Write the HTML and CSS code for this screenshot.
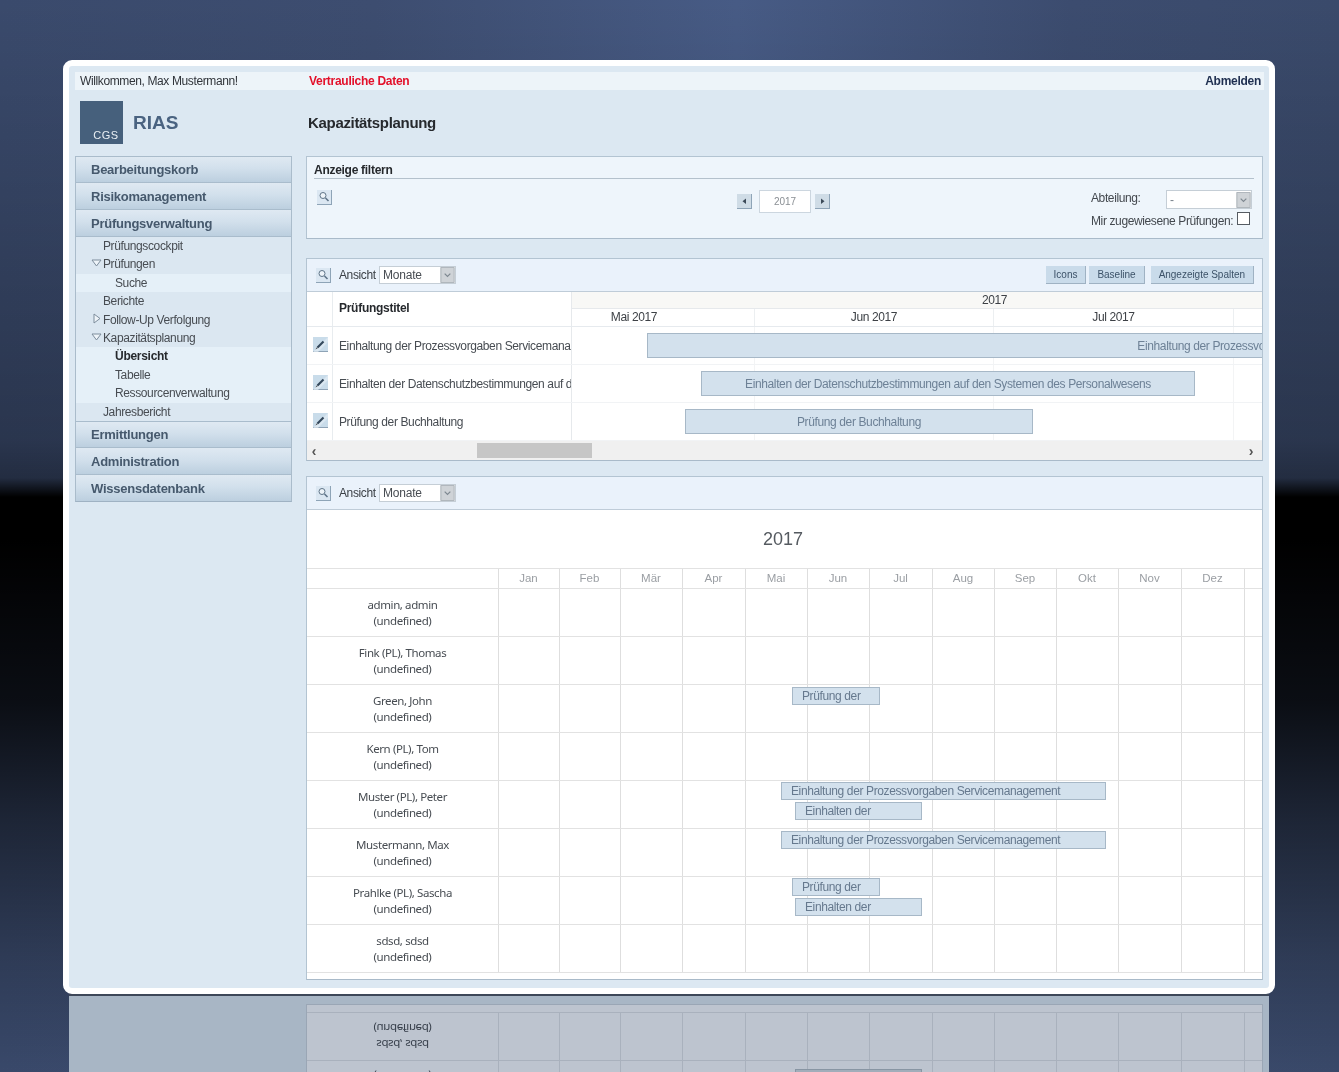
FILE: index.html
```html
<!DOCTYPE html>
<html lang="de">
<head>
<meta charset="utf-8">
<title>RIAS – Kapazitätsplanung</title>
<link rel="stylesheet" href="styles.css">
</head>
<body>
<svg class="defs" width="0" height="0" aria-hidden="true">
  <symbol id="i-search" viewBox="0 0 15 15">
    <rect width="15" height="15" fill="#dbe7f2"/>
    <path d="M0 14.500H15M14.500 0V15" stroke="#8ea4b7" fill="none"/>
    <circle cx="6" cy="5.500" r="3" fill="#eef4f9" stroke="#5f7488"/>
    <path d="M8.500 8l3 3" stroke="#5f7488" stroke-width="1.600"/>
  </symbol>
  <symbol id="i-pencil" viewBox="0 0 15 15">
    <rect width="15" height="15" fill="#c9dcea"/>
    <path d="M0 14.500H15" stroke="#8ea3b6"/>
    <path d="M0 15L15 0V5L5 15Z" fill="#e2edf5" opacity=".7"/>
    <path d="M4.500 10.500L10.500 4.500" stroke="#34485c" stroke-width="2.200"/>
    <path d="M2.500 12.500l1.500-2.300 .8.800Z" fill="#222"/>
  </symbol>
  <symbol id="i-chev" viewBox="0 0 15 17">
    <rect width="15" height="17" fill="#cfd3d7"/>
    <path d="M.5 .5H14.500V16.500H.5Z" stroke="#aeb4ba" fill="none"/>
    <path d="M4.500 7l3 3 3-3" stroke="#7e8890" stroke-width="1.300" fill="none"/>
  </symbol>
  <symbol id="i-down" viewBox="0 0 11 8">
    <path d="M1 1H10L5.500 7Z" fill="#eef4f9" stroke="#7d8d9c"/>
  </symbol>
  <symbol id="i-right" viewBox="0 0 8 11">
    <path d="M1 1V10L7 5.500Z" fill="#eef4f9" stroke="#7d8d9c"/>
  </symbol>
</svg>

<div class="page">
  <div class="window">
    <div class="shell">
      <div class="topbar">
        <span class="welcome">Willkommen, Max Mustermann!</span>
        <span class="secret">Vertrauliche Daten</span>
        <a class="logout">Abmelden</a>
      </div>

      <div class="brand">
        <div class="logo"><span>CGS</span></div>
        <div class="brand-name">RIAS</div>
      </div>
      <h1 class="title">Kapazitätsplanung</h1>

      <nav class="sidebar">
        <div class="nav-head">Bearbeitungskorb</div>
        <div class="nav-head">Risikomanagement</div>
        <div class="nav-head">Prüfungsverwaltung</div>
        <div class="nav-item">Prüfungscockpit</div>
        <div class="nav-item"><svg class="tw-down"><use href="#i-down"/></svg>Prüfungen</div>
        <div class="nav-sub">Suche</div>
        <div class="nav-item">Berichte</div>
        <div class="nav-item"><svg class="tw-right"><use href="#i-right"/></svg>Follow-Up Verfolgung</div>
        <div class="nav-item"><svg class="tw-down"><use href="#i-down"/></svg>Kapazitätsplanung</div>
        <div class="nav-sub nav-current">Übersicht</div>
        <div class="nav-sub">Tabelle</div>
        <div class="nav-sub">Ressourcenverwaltung</div>
        <div class="nav-item">Jahresbericht</div>
        <div class="nav-head nav-head-rule">Ermittlungen</div>
        <div class="nav-head">Administration</div>
        <div class="nav-head nav-head-last">Wissensdatenbank</div>
      </nav>

      <main class="content">
        <section class="panel filter">
          <div class="filter-title">Anzeige filtern</div>
          <div class="filter-body">
            <div class="filter-left"><svg class="ico"><use href="#i-search"/></svg></div>
            <div class="year-nav">
              <button class="step"><svg viewBox="0 0 15 15"><rect width="15" height="15" fill="#cfdce6"/><path d="M0 14.500H15M14.500 0V15" stroke="#8ea4b7"/><path d="M9 4.500V10L5.500 7.200Z" fill="#3c4a58"/></svg></button>
              <div class="year">2017</div>
              <button class="step"><svg viewBox="0 0 15 15"><rect width="15" height="15" fill="#cfdce6"/><path d="M0 14.500H15M14.500 0V15" stroke="#8ea4b7"/><path d="M6 4.500V10L9.500 7.200Z" fill="#3c4a58"/></svg></button>
            </div>
            <div class="filter-right">
              <div class="filter-line">
                <span class="dept-label">Abteilung:</span>
                <div class="select select-dept"><span>-</span><svg class="chev"><use href="#i-chev"/></svg></div>
              </div>
              <div class="filter-line filter-check">
                <span>Mir zugewiesene Prüfungen:</span>
                <span class="checkbox"></span>
              </div>
            </div>
          </div>
        </section>

        <section class="panel gantt">
          <div class="toolbar">
            <svg class="ico"><use href="#i-search"/></svg>
            <span class="tool-label">Ansicht</span>
            <div class="select"><span>Monate</span><svg class="chev"><use href="#i-chev"/></svg></div>
            <div class="tool-actions">
              <button class="btn">Icons</button>
              <button class="btn">Baseline</button>
              <button class="btn btn-wide">Angezeigte Spalten</button>
            </div>
          </div>
          <div class="g-head">
            <div class="g-icon"></div>
            <div class="g-title g-title-head">Prüfungstitel</div>
            <div class="g-scale">
              <div class="g-year">2017</div>
              <div class="g-months">
                <span class="g-month-first">Mai 2017</span><span>Jun 2017</span><span>Jul 2017</span><span></span>
              </div>
            </div>
          </div>
          <div class="g-row">
            <div class="g-icon"><svg class="ico"><use href="#i-pencil"/></svg></div>
            <div class="g-title">Einhaltung der Prozessvorgaben Servicemanagement</div>
            <div class="g-track"><div class="g-bar" style="left:75px;width:1250px">Einhaltung der Prozessvorgaben Servicemanagement</div></div>
          </div>
          <div class="g-row">
            <div class="g-icon"><svg class="ico"><use href="#i-pencil"/></svg></div>
            <div class="g-title">Einhalten der Datenschutzbestimmungen auf den Systemen des Personalwesens</div>
            <div class="g-track"><div class="g-bar" style="left:129px;width:494px">Einhalten der Datenschutzbestimmungen auf den Systemen des Personalwesens</div></div>
          </div>
          <div class="g-row">
            <div class="g-icon"><svg class="ico"><use href="#i-pencil"/></svg></div>
            <div class="g-title">Prüfung der Buchhaltung</div>
            <div class="g-track"><div class="g-bar" style="left:113px;width:348px">Prüfung der Buchhaltung</div></div>
          </div>
          <div class="scrollbar">
            <span class="arrow">‹</span>
            <div class="scroll-track"><div class="thumb"></div></div>
            <span class="arrow arrow-end">›</span>
          </div>
        </section>

        <section class="panel capacity">
          <div class="toolbar">
            <svg class="ico"><use href="#i-search"/></svg>
            <span class="tool-label">Ansicht</span>
            <div class="select"><span>Monate</span><svg class="chev"><use href="#i-chev"/></svg></div>
          </div>
          <div class="cap-title">2017</div>
          <div class="cap-months">
            <span></span><span>Jan</span><span>Feb</span><span>Mär</span><span>Apr</span><span>Mai</span><span>Jun</span><span>Jul</span><span>Aug</span><span>Sep</span><span>Okt</span><span>Nov</span><span>Dez</span><span></span>
          </div>
          <div class="cap-row"><div class="cap-name">admin, admin<br>(undefined)</div><div class="cap-track"></div></div>
          <div class="cap-row"><div class="cap-name">Fink (PL), Thomas<br>(undefined)</div><div class="cap-track"></div></div>
          <div class="cap-row"><div class="cap-name">Green, John<br>(undefined)</div><div class="cap-track"><div class="cap-bar" style="left:294px;top:2px;width:88px">Prüfung der</div></div></div>
          <div class="cap-row"><div class="cap-name">Kern (PL), Tom<br>(undefined)</div><div class="cap-track"></div></div>
          <div class="cap-row"><div class="cap-name">Muster (PL), Peter<br>(undefined)</div><div class="cap-track"><div class="cap-bar" style="left:283px;top:1px;width:325px">Einhaltung der Prozessvorgaben Servicemanagement</div><div class="cap-bar" style="left:297px;top:21px;width:127px">Einhalten der</div></div></div>
          <div class="cap-row"><div class="cap-name">Mustermann, Max<br>(undefined)</div><div class="cap-track"><div class="cap-bar" style="left:283px;top:2px;width:325px">Einhaltung der Prozessvorgaben Servicemanagement</div></div></div>
          <div class="cap-row"><div class="cap-name">Prahlke (PL), Sascha<br>(undefined)</div><div class="cap-track"><div class="cap-bar" style="left:294px;top:1px;width:88px">Prüfung der</div><div class="cap-bar" style="left:297px;top:21px;width:127px">Einhalten der</div></div></div>
          <div class="cap-row"><div class="cap-name">sdsd, sdsd<br>(undefined)</div><div class="cap-track"></div></div>
        </section>
      </main>
    </div>
  </div>

  <div class="reflection" aria-hidden="true">
    <div class="panel-mirror">
      <div class="cap-row mirror"><div class="cap-name">sdsd, sdsd<br>(undefined)</div><div class="cap-track"></div></div>
      <div class="cap-row mirror"><div class="cap-name">Prahlke (PL), Sascha<br>(undefined)</div><div class="cap-track"><div class="cap-bar" style="left:294px;top:1px;width:88px">Prüfung der</div><div class="cap-bar" style="left:297px;top:21px;width:127px">Einhalten der</div></div></div>
    </div>
  </div>
</div>
</body>
</html>
```
FILE: styles.css
```css
* { box-sizing: border-box; }
html, body { margin: 0; padding: 0; }
body {
  font-family: "Liberation Sans", Arial, sans-serif;
  font-size: 12px;
  letter-spacing: -.38px;
  color: #3a3f45;
  background: #000;
}
.defs { position: absolute; }

.page {
  height: 1072px;
  overflow: hidden;
  padding: 60px 64px 0 63px;
  background:
    linear-gradient(180deg,
      rgba(0,0,0,0) 0,
      rgba(0,0,0,.28) 440px,
      rgba(0,0,0,.4) 478px,
      #000 497px,
      #000 540px,
      rgba(0,0,0,.82) 700px,
      rgba(0,0,0,.5) 820px,
      rgba(0,0,0,.2) 960px,
      rgba(0,0,0,.02) 1072px),
    linear-gradient(90deg, #3a4a6c 0, #3d4d70 28%, #475b85 55%, #3c4c6f 80%, #3a4a6b 100%);
}

.window {
  width: 1212px;
  height: 934px;
  border: 6px solid #fff;
  border-radius: 9px;
  background: #dce8f2;
  padding: 6px 6px 0;
  filter: blur(.45px);
}
.shell {
  display: grid;
  grid-template-columns: 217px 957px;
  grid-template-rows: 18px 66px 1fr;
  column-gap: 14px;
}

/* Top bar */
.topbar {
  grid-column: 1 / -1;
  margin-right: -1px;
  display: flex;
  align-items: center;
  padding: 0 3px 0 5px;
  background: #edf4f9;
  color: #30343a;
  line-height: 18px;
}
.welcome { width: 229px; }
.secret { color: #e3102a; font-weight: bold; letter-spacing: -.28px; }
.logout { margin-left: auto; color: #1f2f50; font-weight: bold; letter-spacing: -.28px; }

/* Brand */
.brand { display: flex; padding: 11px 0 0 5px; }
.logo {
  width: 43px;
  height: 43px;
  background: #46607c;
  color: #e9eff4;
  font-size: 11px;
  letter-spacing: .6px;
  display: flex;
  align-items: flex-end;
  justify-content: center;
  line-height: 17px;
  padding-left: 9px;
}
.brand-name {
  margin: 10px 0 0 10px;
  font-size: 19px;
  line-height: 24px;
  font-weight: bold;
  letter-spacing: 0;
  color: #4a6381;
}
.title {
  margin: 0;
  padding-left: 2px;
  font-size: 15px;
  line-height: 65px;
  font-weight: bold;
  letter-spacing: -.32px;
  color: #26292d;
}

/* Sidebar */
.sidebar {
  align-self: start;
  border: 1px solid #aabccb;
  border-bottom-color: #9fb2c3;
  background: #dbe7f1;
}
.nav-head {
  height: 27px;
  padding-left: 15px;
  font-size: 13px;
  line-height: 28px;
  font-weight: bold;
  letter-spacing: -.25px;
  color: #46596d;
  background: linear-gradient(180deg, #dfe9f2 0, #d2e0ec 45%, #bccfdf 100%);
  border-bottom: 1px solid #a9bccc;
}
.nav-head:first-child { height: 26px; line-height: 26px; }
.nav-head-rule { border-top: 1px solid #a9bccc; line-height: 25px; }
.nav-head-last { border-bottom: 0; height: 26px; }
.nav-item, .nav-sub {
  height: 18.4px;
  line-height: 18.4px;
  color: #474c52;
  position: relative;
}
.nav-item { padding-left: 27px; }
.nav-sub { padding-left: 39px; background: #e5f0f8; }
.nav-current { font-weight: bold; color: #26292d; letter-spacing: -.28px; }
.tw-down { position: absolute; left: 15px; top: 4px; width: 11px; height: 8px; }
.tw-right { position: absolute; left: 17px; top: 2px; width: 8px; height: 11px; }

/* Panels */
.content { display: flex; flex-direction: column; gap: 15px; }
.panel {
  border: 1px solid #b3c4d2;
  border-bottom-color: #a9bac9;
  background: #eef5fb;
}
.ico { display: block; width: 15px; height: 15px; }

.filter { height: 83px; margin-bottom: 4px; padding: 0 8px 0 7px; }
.filter-title {
  height: 22px;
  border-bottom: 1px solid #b4c1cc;
  font-weight: bold;
  letter-spacing: -.28px;
  line-height: 26px;
  color: #26292d;
}
.filter-body {
  display: grid;
  grid-template-columns: 1fr auto 1fr;
  padding-top: 11px;
}
.filter-left { padding-left: 3px; }
.year-nav { display: flex; align-items: flex-start; gap: 4px; }
.step {
  width: 16px;
  height: 15px;
  padding: 0;
  border: 0;
  margin-top: 4px;
  background: none;
}
.step svg { display: block; width: 15px; height: 15px; }
.step:first-child { margin-right: 2px; }
.year {
  width: 52px;
  height: 23px;
  border: 1px solid #ccd6df;
  background: #fff;
  color: #8a8f94;
  font-size: 10px;
  letter-spacing: 0;
  line-height: 21px;
  text-align: center;
}
.filter-right { padding-left: 260px; }
.filter-line { display: flex; align-items: center; white-space: nowrap; color: #43484e; }
.dept-label { width: 75px; padding-bottom: 3px; }
.select {
  width: 77px;
  height: 18px;
  background: #fff;
  border: 1px solid #c5ced6;
  display: flex;
  align-items: center;
  justify-content: space-between;
  color: #474c52;
  padding-left: 3px;
  letter-spacing: -.2px;
}
.chev { width: 15px; height: 16px; display: block; }
.select-dept { width: 86px; height: 19px; padding-left: 3px; color: #77808a; }
.filter-check { margin-top: 2px; height: 19px; }
.checkbox {
  width: 13px;
  height: 13px;
  margin: -4px 0 0 4px;
  background: #fff;
  border: 1px solid #555b62;
}

/* Toolbars */
.toolbar {
  height: 33px;
  display: flex;
  align-items: center;
  padding-left: 9px;
  background: #eaf2fb;
  border-bottom: 1px solid #bfccd8;
}
.tool-label { width: 40px; margin-left: 8px; color: #3a3f45; }
.tool-actions { margin-left: auto; margin-right: 8px; display: flex; gap: 3px; }
.btn {
  height: 18px;
  padding: 0 8px;
  border: 0;
  border-right: 1px solid #9fb2c3;
  border-bottom: 1px solid #9fb2c3;
  background: #c9dbea;
  color: #3c5268;
  font: 10px/17px "Liberation Sans", Arial, sans-serif;
  letter-spacing: -.02px;
}
.btn-wide { margin-left: 3px; }

/* Gantt */
.gantt { height: 203px; display: flex; flex-direction: column; }
.gantt .toolbar { flex: 0 0 33px; }
.g-head, .g-row {
  display: grid;
  grid-template-columns: 26px 239px 690px;
  background: #fff;
}
.g-head { height: 35px; border-bottom: 1px solid #e6eaee; }
.g-row { height: 38px; border-bottom: 1px solid #f1f3f5; }
.g-icon { border-right: 1px solid #e8ecef; padding: 10px 0 0 6px; }
.g-title {
  border-right: 1px solid #e6e9ec;
  padding-left: 6px;
  line-height: 38px;
  white-space: nowrap;
  overflow: hidden;
  color: #474c52;
}
.g-title-head { font-weight: bold; letter-spacing: -.28px; color: #26292d; line-height: 33px; }
.g-year {
  height: 17px;
  background: #f8f8f6;
  border-bottom: 1px solid #e6e9ec;
  text-align: center;
  line-height: 17px;
  padding-left: 155px;
  color: #3d4146;
}
.g-months {
  display: grid;
  grid-template-columns: 183px 239px 240px 28px;
  height: 17px;
  line-height: 17px;
  text-align: center;
  color: #3d4146;
}
.g-months span { border-right: 1px solid #eceff1; }
.g-months span:last-child { border-right: 0; }
.g-months .g-month-first { padding-right: 58px; }
.g-track {
  position: relative;
  overflow: hidden;
  background:
    linear-gradient(#f3f4f5, #f3f4f5) 182px 0 / 1px 100% no-repeat,
    linear-gradient(#f3f4f5, #f3f4f5) 421px 0 / 1px 100% no-repeat,
    linear-gradient(#f3f4f5, #f3f4f5) 661px 0 / 1px 100% no-repeat;
}
.g-bar {
  position: absolute;
  top: 6px;
  height: 25px;
  background: #d3e1ed;
  border: 1px solid #a7b8c7;
  color: #6d8196;
  line-height: 25px;
  text-align: center;
  white-space: nowrap;
  overflow: hidden;
}
.scrollbar {
  flex: 1;
  display: flex;
  align-items: center;
  background: #f0f0f0;
  color: #555;
}
.arrow { width: 14px; text-align: center; font: bold 14px/16px "Liberation Sans", Arial, sans-serif; }
.arrow-end { margin-right: 4px; }
.scroll-track { flex: 1; height: 15px; padding-left: 156px; }
.thumb { width: 115px; height: 15px; background: #c6c6c6; }

/* Capacity chart */
.capacity { height: 504px; background: #fff; }
.cap-title {
  height: 58px;
  padding-right: 3px;
  text-align: center;
  font-size: 18px;
  letter-spacing: 0;
  line-height: 58px;
  color: #555a60;
}
.cap-months {
  display: grid;
  grid-template-columns: 191px 61px 61px 62px 63px 62px 62px 63px 62px 62px 62px 63px 63px 1fr;
  height: 21px;
  border-top: 1px solid #e2e2e2;
  border-bottom: 1px solid #e2e2e2;
  line-height: 19px;
  text-align: center;
  color: #9a9ea3;
  letter-spacing: 0;
  font-size: 11.5px;
}
.cap-months span { border-left: 1px solid #dedede; padding-right: 1px; }
.cap-months span:first-child { border-left: 0; }
.cap-row {
  display: grid;
  grid-template-columns: 191px 747px 1fr;
  height: 48px;
  border-bottom: 1px solid #e2e2e2;
}
.cap-name {
  padding-top: 8px;
  text-align: center;
  font-family: "Noto Sans", sans-serif;
  font-size: 11.5px;
  line-height: 15.5px;
  color: #474c52;
  letter-spacing: -.4px;
}
.cap-track {
  position: relative;
  --g: #dedede;
  background:
    linear-gradient(var(--g), var(--g)) 0 0 / 1px 100% no-repeat,
    linear-gradient(var(--g), var(--g)) 61px 0 / 1px 100% no-repeat,
    linear-gradient(var(--g), var(--g)) 122px 0 / 1px 100% no-repeat,
    linear-gradient(var(--g), var(--g)) 184px 0 / 1px 100% no-repeat,
    linear-gradient(var(--g), var(--g)) 247px 0 / 1px 100% no-repeat,
    linear-gradient(var(--g), var(--g)) 309px 0 / 1px 100% no-repeat,
    linear-gradient(var(--g), var(--g)) 371px 0 / 1px 100% no-repeat,
    linear-gradient(var(--g), var(--g)) 434px 0 / 1px 100% no-repeat,
    linear-gradient(var(--g), var(--g)) 496px 0 / 1px 100% no-repeat,
    linear-gradient(var(--g), var(--g)) 558px 0 / 1px 100% no-repeat,
    linear-gradient(var(--g), var(--g)) 620px 0 / 1px 100% no-repeat,
    linear-gradient(var(--g), var(--g)) 683px 0 / 1px 100% no-repeat,
    linear-gradient(var(--g), var(--g)) 746px 0 / 1px 100% no-repeat;
}
.cap-bar {
  position: absolute;
  height: 18px;
  padding-left: 9px;
  background: #d3e1ed;
  border: 1px solid #a7b8c7;
  color: #66798e;
  line-height: 16px;
  white-space: nowrap;
  overflow: hidden;
}

/* Reflection under the window */
.reflection {
  width: 1200px;
  height: 78px;
  margin-left: 6px;
  overflow: hidden;
  background: #a8b6c5;
  border-top: 2px solid #3d4758;
  padding: 8px 0 0 237px;
}
.panel-mirror {
  width: 957px;
  height: 200px;
  padding-top: 7px;
  background: #bdc4cf;
  border: 1px solid #9aa6b5;
}
.mirror {
  transform: scaleY(-1);
  border-bottom-color: #a9b1bd;
}
.mirror .cap-name { color: #39414d; }
.mirror .cap-track { --g: #a9b1bd; }
.mirror .cap-bar { background: #a1adba; border-color: #8895a3; color: #4c5968; }
```
